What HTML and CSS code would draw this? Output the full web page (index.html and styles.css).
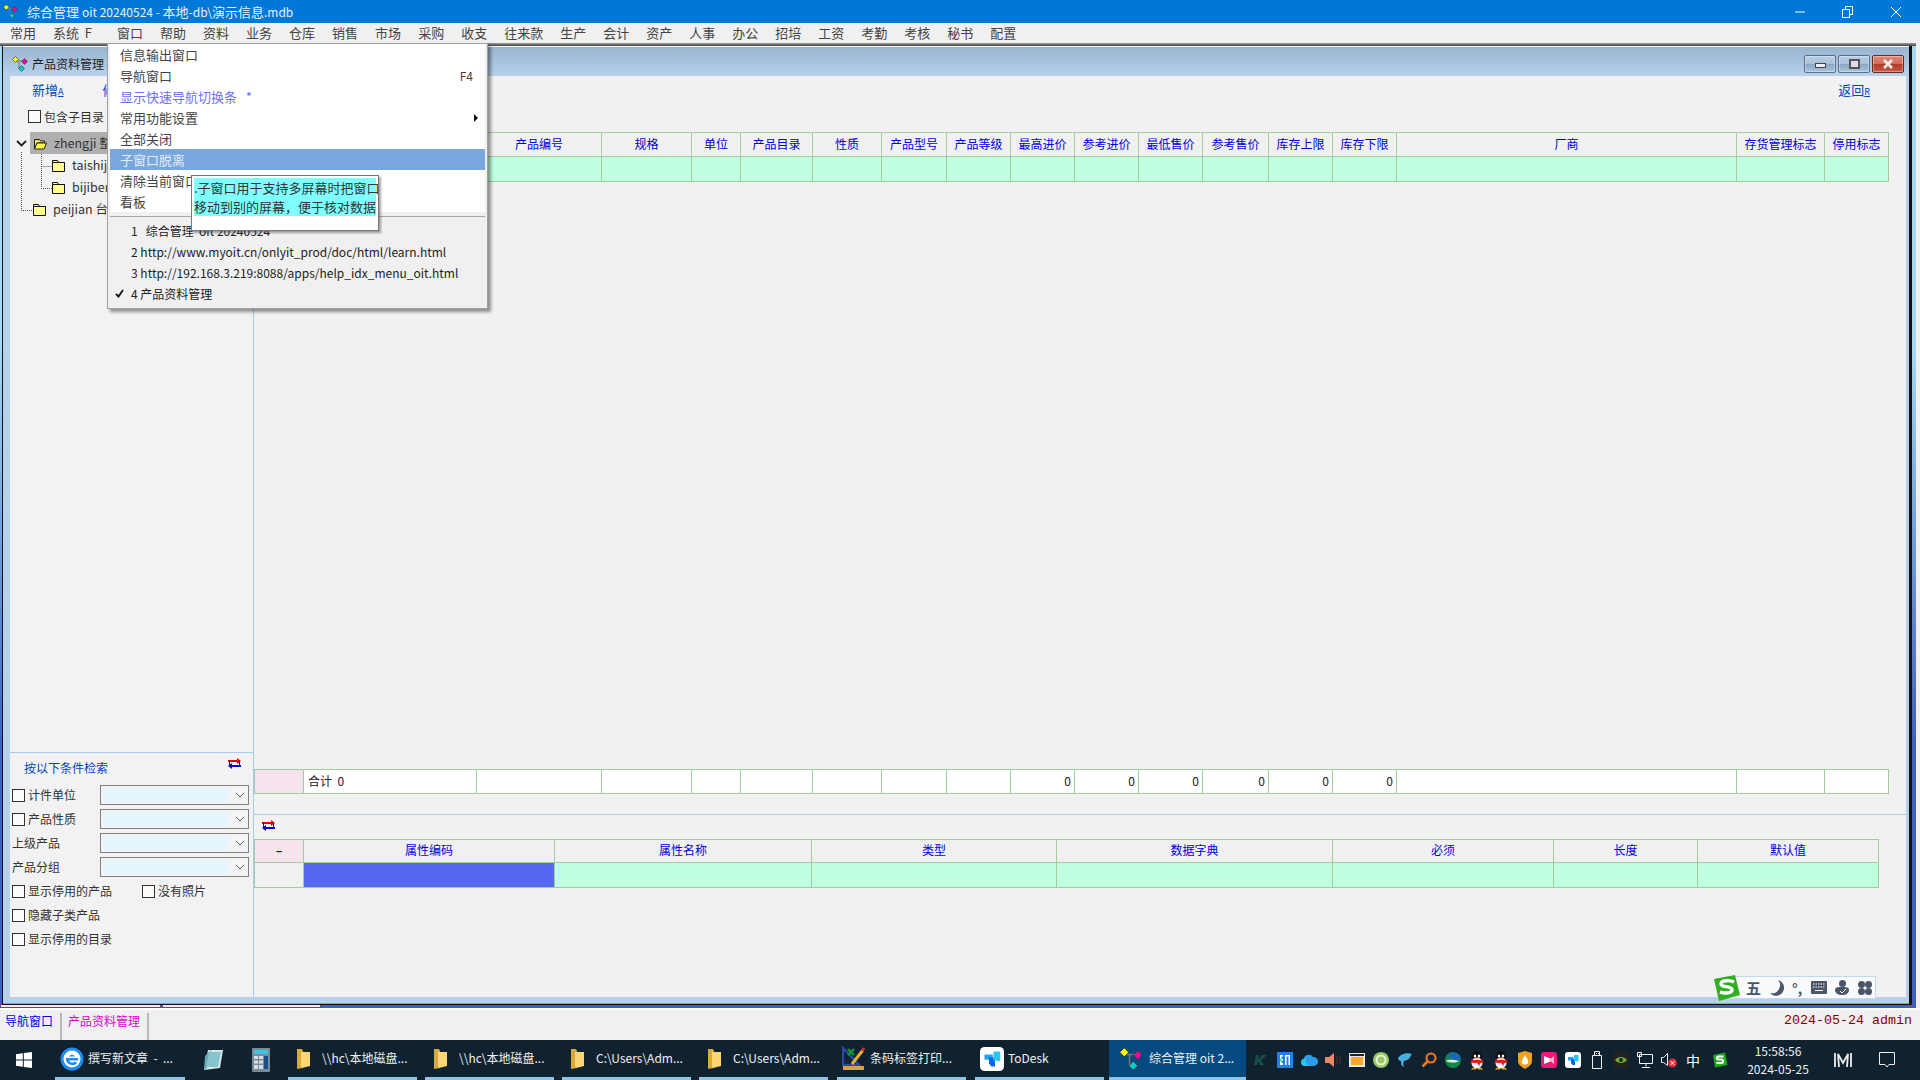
FILE: index.html
```html
<!DOCTYPE html>
<html lang="zh">
<head>
<meta charset="utf-8">
<title>综合管理 oit 20240524</title>
<link rel="stylesheet" href="styles.css">
</head>
<body>
<svg class="defs" width="0" height="0" aria-hidden="true">
  <symbol id="i-app" viewBox="0 0 16 16">
    <path d="M4 5h7M7 5v7h3" fill="none" stroke="#777" stroke-width="1"/>
    <path d="M3.500 .5l3 3-3 3-3-3z" fill="#ff0" stroke="#333" stroke-width=".6"/>
    <path d="M12.500 2.500l3 3-3 3-3-3z" fill="#e0109c" stroke="#333" stroke-width=".6"/>
    <path d="M9.500 9.500l3 3-3 3-3-3z" fill="#10c8c8" stroke="#333" stroke-width=".6"/>
  </symbol>
  <symbol id="i-folder" viewBox="0 0 13 13">
    <path d="M.5 3.500V1.500h5l1 2h6v9H.5z" fill="#ffff90" stroke="#111"/>
    <path d="M.5 3.500h12" stroke="#111"/>
  </symbol>
  <symbol id="i-folder-open" viewBox="0 0 13 13">
    <path d="M.5 2.500h5l1 1.500h4v2H3l-2.500 6z" fill="#f0e070" stroke="#222"/>
    <path d="M3 6h9.500l-2.500 6H.5z" fill="#ffff40" stroke="#222"/>
  </symbol>
  <symbol id="i-swap" viewBox="0 0 13 11">
    <path d="M0 3h10" stroke="#e00000" stroke-width="2"/><path d="M9 0l4 3-4 3z" fill="#e00000"/>
    <path d="M3 8h10" stroke="#0000e0" stroke-width="2"/><path d="M4 5L0 8l4 3z" fill="#0000e0"/>
    <path d="M1.500 3v5M11.500 3v5" stroke="#222"/>
  </symbol>
  <symbol id="i-tfolder" viewBox="0 0 15 22">
    <path d="M1 1h5l1 2v17l-6 1z" fill="#d9a93a"/>
    <path d="M5 4h9v14l-8 2-1-2z" fill="#fbd773"/>
  </symbol>
  <symbol id="i-qq" viewBox="0 0 16 20">
    <ellipse cx="8" cy="7" rx="5" ry="6" fill="#111"/>
    <ellipse cx="8" cy="13" rx="5.500" ry="5.500" fill="#f4f4f4"/>
    <path d="M2 10h12v2.500l-3 1-1 3-1-3-7-1z" fill="#d81e1e"/>
    <ellipse cx="6" cy="6" rx="1.200" ry="1.500" fill="#fff"/><ellipse cx="10" cy="6" rx="1.200" ry="1.500" fill="#fff"/>
    <path d="M5.500 8.500h5l-2.500 1.500z" fill="#f0a818"/>
    <path d="M3 18h4v1.500H2zM9 18h4l1 1.500H9z" fill="#f0a818"/>
  </symbol>
  <symbol id="i-todesk" viewBox="0 0 16 16">
    <rect width="16" height="16" rx="3" fill="#fff"/>
    <path d="M3 5h5.500v3.500H3z" fill="#16a7f0"/><path d="M6 7h4v6H7.500L6 11z" fill="#0a68e8"/><path d="M9 3h4.500v6.500L9 9z" fill="#24c8f0"/>
  </symbol>
</svg>

<div class="app">
  <header class="titlebar">
    <svg class="title-icon"><use href="#i-app"/></svg>
    <span class="title-text">综合管理 <span class="lat">oit 20240524 - </span>本地<span class="lat">-db\</span>演示信息<span class="lat">.mdb</span></span>
    <div class="win-controls">
      <svg width="12" height="12" viewBox="0 0 12 12"><path d="M1 6h10" stroke="#fff"/></svg>
      <svg width="12" height="12" viewBox="0 0 12 12"><path d="M.5 3.500h7v8h-7zM3.500 3V.5h7v8H8" fill="none" stroke="#fff"/></svg>
      <svg width="12" height="12" viewBox="0 0 12 12"><path d="M1 1l10 10M11 1L1 11" stroke="#fff"/></svg>
    </div>
  </header>

  <nav class="menubar">
    <span>常用</span><span class="menu-f">系统&nbsp; F</span><span>窗口</span><span>帮助</span><span>资料</span><span>业务</span><span>仓库</span><span>销售</span><span>市场</span><span>采购</span><span>收支</span><span>往来款</span><span>生产</span><span>会计</span><span>资产</span><span>人事</span><span>办公</span><span>招培</span><span>工资</span><span>考勤</span><span>考核</span><span>秘书</span><span>配置</span>
  </nav>

  <main class="mdi">
    <section class="child">
      <div class="child-title">
        <svg class="child-icon"><use href="#i-app"/></svg>
        <span class="child-name">产品资料管理</span>
        <div class="child-controls">
          <span class="cbtn"><i class="glyph-min"></i></span>
          <span class="cbtn"><i class="glyph-max"></i></span>
          <span class="cbtn cbtn-close"><svg width="12" height="10" viewBox="0 0 12 10"><path d="M2 1l8 8M10 1L2 9" stroke="#eee" stroke-width="2.600"/></svg></span>
        </div>
      </div>
      <div class="child-body">
        <aside class="left">
          <div class="left-tools"><a class="link">新增<u>A</u></a><a class="link">修改<u>E</u></a></div>
          <div class="check-row inc"><span class="check"></span><span>包含子目录</span></div>
          <div class="tree">
            <svg class="tree-lines" width="60" height="90" viewBox="0 0 60 90">
              <path d="M21.500 20v58.500H33M41.500 22v34.500H52M41.500 34.500H52" fill="none" stroke="#555" stroke-dasharray="1 1"/>
              <path d="M17 9l4.500 4.500L26 9" fill="none" stroke="#222" stroke-width="1.800"/>
            </svg>
            <div class="tree-row lv0 selected"><svg class="folder"><use href="#i-folder-open"/></svg><span>zhengji 整机</span></div>
            <div class="tree-row lv1"><svg class="folder"><use href="#i-folder"/></svg><span>taishiji 台式机</span></div>
            <div class="tree-row lv1"><svg class="folder"><use href="#i-folder"/></svg><span>bijiben 笔记本</span></div>
            <div class="tree-row lv0"><svg class="folder"><use href="#i-folder"/></svg><span>peijian 台配件</span></div>
          </div>
          <div class="filter">
            <div class="filter-head"><span class="filter-title">按以下条件检索</span><svg class="swap"><use href="#i-swap"/></svg></div>
            <div class="f-row"><span class="check"></span><span class="f-label">计件单位</span><span class="combo"><b></b><svg width="10" height="6" viewBox="0 0 10 6"><path d="M1 1l4 4 4-4" fill="none" stroke="#666"/></svg></span></div>
            <div class="f-row"><span class="check"></span><span class="f-label">产品性质</span><span class="combo"><b></b><svg width="10" height="6" viewBox="0 0 10 6"><path d="M1 1l4 4 4-4" fill="none" stroke="#666"/></svg></span></div>
            <div class="f-row"><span class="f-label f-wide">上级产品</span><span class="combo"><b></b><svg width="10" height="6" viewBox="0 0 10 6"><path d="M1 1l4 4 4-4" fill="none" stroke="#666"/></svg></span></div>
            <div class="f-row"><span class="f-label f-wide">产品分组</span><span class="combo"><b></b><svg width="10" height="6" viewBox="0 0 10 6"><path d="M1 1l4 4 4-4" fill="none" stroke="#666"/></svg></span></div>
            <div class="f-row"><span class="check"></span><span class="f-label f-long">显示停用的产品</span><span class="check"></span><span class="f-label">没有照片</span></div>
            <div class="f-row"><span class="check"></span><span class="f-label">隐藏子类产品</span></div>
            <div class="f-row"><span class="check"></span><span class="f-label">显示停用的目录</span></div>
          </div>
        </aside>

        <div class="right">
          <div class="right-tools"><a class="link">返回<u>R</u></a></div>
          <div class="grid g-main">
            <div class="hd">序号</div><div class="hd">产品名称</div><div class="hd">产品编号</div><div class="hd">规格</div><div class="hd">单位</div><div class="hd">产品目录</div><div class="hd">性质</div><div class="hd">产品型号</div><div class="hd">产品等级</div><div class="hd">最高进价</div><div class="hd">参考进价</div><div class="hd">最低售价</div><div class="hd">参考售价</div><div class="hd">库存上限</div><div class="hd">库存下限</div><div class="hd">厂商</div><div class="hd">存货管理标志</div><div class="hd">停用标志</div>
            <div class="gc"></div><div class="gc"></div><div class="gc"></div><div class="gc"></div><div class="gc"></div><div class="gc"></div><div class="gc"></div><div class="gc"></div><div class="gc"></div><div class="gc"></div><div class="gc"></div><div class="gc"></div><div class="gc"></div><div class="gc"></div><div class="gc"></div><div class="gc"></div><div class="gc"></div><div class="gc"></div>
          </div>
          <div class="spacer"></div>
          <div class="grid g-main g-sum">
            <div class="pink"></div><div class="wc tl">合计&nbsp; 0</div><div class="wc"></div><div class="wc"></div><div class="wc"></div><div class="wc"></div><div class="wc"></div><div class="wc"></div><div class="wc"></div><div class="wc tr">0</div><div class="wc tr">0</div><div class="wc tr">0</div><div class="wc tr">0</div><div class="wc tr">0</div><div class="wc tr">0</div><div class="wc"></div><div class="wc"></div><div class="wc"></div>
          </div>
          <div class="detail">
            <div class="detail-head"><svg class="swap"><use href="#i-swap"/></svg></div>
            <div class="grid g-detail">
              <div class="pink hd-minus">–</div><div class="hd">属性编码</div><div class="hd">属性名称</div><div class="hd">类型</div><div class="hd">数据字典</div><div class="hd">必须</div><div class="hd">长度</div><div class="hd">默认值</div>
              <div class="plain"></div><div class="gc sel"></div><div class="gc"></div><div class="gc"></div><div class="gc"></div><div class="gc"></div><div class="gc"></div><div class="gc"></div>
            </div>
          </div>
        </div>
      </div>
      <div class="child-foot"></div>
    </section>
    <div class="mdi-strip"><i></i><i class="long"></i></div>
  </main>

  <footer class="status">
    <span class="tab tab-nav">导航窗口</span>
    <span class="tab tab-cur">产品资料管理</span>
    <span class="status-right">2024-05-24 admin</span>
  </footer>

  <div class="taskbar">
    <span class="start"><svg width="16" height="16" viewBox="0 0 16 16"><path d="M0 2.300l6.800-1v6.200H0zM7.800 1.100L16 0v7.500H7.800zM0 8.500h6.800v6.200l-6.800-1zM7.800 8.500H16V16l-8.200-1.100z" fill="#fff"/></svg></span>
    <span class="task t-first">
      <svg width="24" height="24" viewBox="0 0 24 24"><circle cx="12" cy="12" r="11.500" fill="#1d8cf0"/><circle cx="12" cy="12" r="8.500" fill="#fff"/><path d="M6 11h12v2.500H9c.5 2 3.500 3 6.500 1l1.500 2c-4 3-10 1.500-11-3.500zM9 9.500c1-2.500 5-2.500 6 0z" fill="#1d8cf0"/></svg>
      <span class="tlabel">撰写新文章&nbsp; -&nbsp; ...</span>
    </span>
    <span class="pin"><svg width="24" height="24" viewBox="0 0 24 24"><path d="M7 2h15l-3 18-16 2z" fill="#d8e8ea"/><path d="M4 8l6-6-4 18-3 2z" fill="#5fa8b8"/><path d="M8 4h12l-3 15H5z" fill="#88c4cc"/></svg></span>
    <span class="pin"><svg width="18" height="24" viewBox="0 0 18 24"><rect width="18" height="24" rx="1" fill="#7b8a94"/><rect x="2" y="2" width="14" height="4" fill="#37c8e8"/><path d="M2 8h4v3H2zM7 8h4v3H7zM2 12.500h4v3H2zM7 12.500h4v3H7zM2 17h4v4H2zM7 17h4v4H7z" fill="#d8dee2"/><path d="M12 8h4v13h-4z" fill="#15508c"/></svg></span>
    <span class="task"><svg class="tf"><use href="#i-tfolder"/></svg><span class="tlabel">\\hc\本地磁盘...</span></span>
    <span class="task"><svg class="tf"><use href="#i-tfolder"/></svg><span class="tlabel">\\hc\本地磁盘...</span></span>
    <span class="task"><svg class="tf"><use href="#i-tfolder"/></svg><span class="tlabel">C:\Users\Adm...</span></span>
    <span class="task"><svg class="tf"><use href="#i-tfolder"/></svg><span class="tlabel">C:\Users\Adm...</span></span>
    <span class="task task-ic"><svg width="24" height="26" viewBox="0 0 24 26"><path d="M1 2v17h16z" fill="none" stroke="#2848a8" stroke-width="2.400"/><path d="M6 3l6 6M12 3L6 9" stroke="#1a9838" stroke-width="2.400"/><path d="M10 18L21 4" stroke="#e8b030" stroke-width="3"/><path d="M20 5l2-3" stroke="#e02828" stroke-width="3"/><path d="M1 20h21v4H1z" fill="#d8a040"/></svg><span class="tlabel">条码标签打印...</span></span>
    <span class="task task-ic"><svg width="24" height="24"><use href="#i-todesk"/></svg><span class="tlabel">ToDesk</span></span>
    <span class="task task-active"><svg width="24" height="24"><use href="#i-app"/></svg><span class="tlabel">综合管理 oit 2...</span></span>
    <div class="tray">
      <span><svg width="14" height="12" viewBox="0 0 14 12"><path d="M2 1h3L4 5l5-4h4L7 6l3 5H6L4 7l-1 4H0z" fill="#155048"/></svg></span>
      <span><svg width="16" height="16" viewBox="0 0 16 16"><rect width="16" height="16" fill="#1e82e8"/><path d="M3 3h3v1.500H4.500V7H6v1.500H4.500V11H6v2H3zM8 3h5v10h-1.500V4.500H9.500V13H8z" fill="#fff"/><path d="M3 6l2 2-2 2z" fill="#48e070"/></svg></span>
      <span><svg width="18" height="12" viewBox="0 0 18 12"><path d="M5 12a4 4 0 0 1-1-7.800A5 5 0 0 1 13 3a4.500 4.500 0 0 1 1 9z" fill="#2c9ce8"/><path d="M1 8a4 4 0 0 1 5-3 7 7 0 0 0 3 7H5a4 4 0 0 1-4-4z" fill="#28c8e0"/></svg></span>
      <span><svg width="16" height="16" viewBox="0 0 16 16"><path d="M0 5h4l5-4v14l-5-4H0z" fill="#e88868"/><path d="M12 4v8M15 3v10" stroke="#5a3030"/></svg></span>
      <span><svg width="16" height="14" viewBox="0 0 16 14"><rect width="16" height="14" fill="#e8e8e8"/><rect x="1" y="1" width="14" height="2" fill="#222"/><rect x="2" y="4" width="12" height="8" fill="#f8a828"/></svg></span>
      <span><svg width="16" height="16" viewBox="0 0 16 16"><circle cx="8" cy="8" r="8" fill="#98c860"/><circle cx="8" cy="8" r="4.500" fill="none" stroke="#e8f4d8" stroke-width="2"/></svg></span>
      <span><svg width="16" height="16" viewBox="0 0 16 16"><path d="M1 7c1-4 7-7 14-5-2 2-2 5-5 6l-3 1c-1 2-1 4 0 6-3-1-3-4-3-6-1 0-2-1-3-2z" fill="#48b0e0"/></svg></span>
      <span><svg width="16" height="16" viewBox="0 0 16 16"><circle cx="10" cy="6" r="4.500" fill="none" stroke="#f07818" stroke-width="2.200"/><path d="M6.500 9.500L1.500 14.500" stroke="#f07818" stroke-width="2.600"/></svg></span>
      <span><svg width="16" height="16" viewBox="0 0 16 16"><circle cx="8" cy="8" r="8" fill="#108848"/><path d="M3 2.500A8 8 0 0 1 16 8H7z" fill="#1868b8"/><path d="M1 9c3-2 8-1 13 0-3 2-9 2-13 0z" fill="#e0f0e0"/></svg></span>
      <span><svg width="16" height="20"><use href="#i-qq"/></svg></span>
      <span><svg width="16" height="20"><use href="#i-qq"/></svg></span>
      <span><svg width="16" height="18" viewBox="0 0 16 18"><path d="M1 2l7-2 7 2v8c0 4-4 6-7 8-3-2-7-4-7-8z" fill="#f0a020"/><path d="M8 4c1 3 4 4 3 8-1 2-5 2-6 0-1-2 1-4 3-8z" fill="#fff"/></svg></span>
      <span><svg width="16" height="16" viewBox="0 0 16 16"><rect width="16" height="16" rx="3" fill="#f01878"/><path d="M3 4l10 4-10 4z" fill="#fff"/><path d="M13 4v8L8 8z" fill="#f8b0d0"/></svg></span>
      <span><svg width="16" height="16"><use href="#i-todesk"/></svg></span>
      <span><svg width="12" height="18" viewBox="0 0 12 18"><path d="M3.500 .5h5v4h-5zM1.500 4.500h9v13h-9z" fill="none" stroke="#eee"/><path d="M5 2h1v1H5zM7 2h1v1H7z" fill="#eee"/></svg></span>
      <span><svg width="16" height="16" viewBox="0 0 16 16"><rect width="16" height="16" fill="#222"/><path d="M2 8c3-4 9-4 12 0-3 4-9 4-12 0z" fill="#70b030"/><circle cx="8" cy="8" r="2" fill="#222"/></svg></span>
      <span><svg width="16" height="16" viewBox="0 0 16 16"><path d="M2.500 2.500h13v9h-13zM.5 .5h4v4h-4zM9 11.500v3M5 15.500h8" fill="none" stroke="#f4f4f4"/></svg></span>
      <span class="tray-vol"><svg width="16" height="16" viewBox="0 0 16 16"><path d="M.5 5.500h2l4-4v12l-4-3h-2z" fill="none" stroke="#eee"/><circle cx="11.500" cy="11" r="4.500" fill="#e02838"/><path d="M9.500 9l4 4M13.500 9l-4 4" stroke="#fff"/></svg></span>
      <span class="tray-zh">中</span>
      <span class="tray-s"><svg width="16" height="16" viewBox="0 0 16 16"><path d="M1 3l12-2.500L15.500 13 3 15.500z" fill="#1ea820"/><path d="M11.500 4.500H6.500c-2 0-2 3 0 3h3c2 0 2 3.500 0 3.500H4.500" fill="none" stroke="#fff" stroke-width="2"/></svg></span>
    </div>
    <div class="clock"><span>15:58:56</span><span>2024-05-25</span></div>
    <span class="m-icon"><svg width="18" height="16" viewBox="0 0 18 16"><path d="M1 15V1M5 15L4 2l5 9 5-9-1 13M17 15V1" fill="none" stroke="#eee" stroke-width="1.800"/></svg></span>
    <span class="notify"><svg width="16" height="16" viewBox="0 0 16 16"><path d="M.5 .5h15v12H10l-2 2.500L6 12.500H.5z" fill="none" stroke="#eee"/></svg></span>
  </div>

  <div class="popup">
    <div class="group-top">
      <div class="mi">信息输出窗口</div>
      <div class="mi mi-split"><span>导航窗口</span><span class="mi-key">F4</span></div>
      <div class="mi mi-violet">显示快速导航切换条&nbsp;&nbsp; *</div>
      <div class="mi mi-split"><span>常用功能设置</span><i class="arrow"></i></div>
      <div class="mi">全部关闭</div>
      <div class="mi mi-hi">子窗口脱离</div>
      <div class="mi">清除当前窗口</div>
      <div class="mi">看板</div>
    </div>
    <div class="sep"></div>
    <div class="mi mi-n lat">1&nbsp;&nbsp;&nbsp;综合管理&nbsp; oit 20240524</div>
    <div class="mi mi-n lat">2 http://www.myoit.cn/onlyit_prod/doc/html/learn.html</div>
    <div class="mi mi-n lat">3 http://192.168.3.219:8088/apps/help_idx_menu_oit.html</div>
    <div class="mi mi-n lat"><svg class="tick" width="9" height="9" viewBox="0 0 9 9"><path d="M1 5l2.500 2.500L8 1" fill="none" stroke="#111" stroke-width="1.800"/></svg>4 产品资料管理</div>
  </div>

  <div class="tip">
    <div class="tip-l">.子窗口用于支持多屏幕时把窗口</div>
    <div class="tip-l">移动到别的屏幕，便于核对数据</div>
  </div>

  <div class="ime">
    <svg class="ime-s" width="28" height="28" viewBox="0 0 28 28"><path d="M1 5l21-4 5 20-21 6z" fill="#2fb020"/><path d="M21 8c-4-2-13-2-13 2 0 4 11 1 11 6 0 3-7 4-12 2" fill="none" stroke="#fff" stroke-width="3.400"/></svg>
    <span class="ime-wu">五</span>
    <svg width="14" height="16" viewBox="0 0 14 16"><path d="M8 0a8 8 0 0 1-8 13 8 8 0 1 0 8-13z" fill="#4a5568"/></svg>
    <span class="ime-dot">°,</span>
    <svg width="16" height="13" viewBox="0 0 16 13"><rect width="16" height="13" rx="1" fill="#4a5568"/><path d="M2 3h12M2 6h12" stroke="#fff" stroke-dasharray="1.500 1" /><path d="M4 9.500h8" stroke="#fff"/></svg>
    <svg width="14" height="15" viewBox="0 0 14 15"><circle cx="7.500" cy="3.500" r="3.500" fill="#4a5568"/><path d="M0 10c0-3 3-3 7-3s7 0 7 3-3 5-7 5-7-2-7-5z" fill="#4a5568"/><path d="M5 11l2 2 4-4" fill="none" stroke="#fff"/></svg>
    <svg width="14" height="14" viewBox="0 0 14 14"><circle cx="3.500" cy="3.500" r="3.500" fill="#4a5568"/><circle cx="10.500" cy="3.500" r="3.500" fill="#4a5568"/><circle cx="3.500" cy="10.500" r="3.500" fill="#4a5568"/><circle cx="10.500" cy="10.500" r="3.500" fill="#4a5568"/></svg>
  </div>
</div>
</body>
</html>
```
FILE: styles.css
```css
* { box-sizing: border-box; }
html, body { margin: 0; padding: 0; }
body { font-family: "Noto Sans CJK SC", "Liberation Sans", sans-serif; font-size: 13px; line-height: 16px; color: #333; background: #f0f0f0; }
.defs { position: absolute; }
.lat { font-size: 12px; }
.app { position: relative; width: 1920px; height: 1080px; display: flex; flex-direction: column; overflow: hidden; }

.titlebar { height: 23px; flex: none; background: #0078d7; color: #e8f2fb; display: flex; align-items: center; padding-left: 3px; }
.title-icon { width: 15px; height: 15px; flex: none; }
.title-text { margin-left: 9px; }
.win-controls { margin-left: auto; display: flex; gap: 36px; padding-right: 18px; }
.win-controls svg { display: block; }

.menubar { height: 20px; flex: none; background: #f0f0f0; display: flex; align-items: center; gap: 17px; padding-left: 10px; color: #444; }
.menu-f { min-width: 47px; }

.mdi { height: 965px; flex: none; display: flex; flex-direction: column; padding: 3px 8px 0 2px; background: linear-gradient(#a8d8f0 300px, #4060c0 700px); position: relative; }
.mdi::before { content: ""; position: absolute; left: 0; right: 0; top: 0; height: 3px; background: linear-gradient(#a0a0a0, #404040); }
.mdi::after { content: ""; position: absolute; right: 0; top: 0; bottom: 0; width: 4px; background: #f0f0f0; }
.child { height: 959px; flex: none; display: flex; flex-direction: column; border-left: 1px solid #111; border-right: 3px solid #111; border-bottom: 1px solid #111; background: #b8d0ea; padding-top: 1px; box-shadow: inset 0 1px 0 #f4f8fc; }
.child-title { height: 29px; flex: none; background: linear-gradient(#9ab3d0, #b8d2ee); display: flex; align-items: center; padding: 4px 5px 0 9px; color: #222; font-size: 12px; }
.child-icon { width: 16px; height: 16px; flex: none; }
.child-name { margin-left: 4px; }
.child-controls { margin-left: auto; display: flex; gap: 2px; }
.cbtn { width: 32px; height: 18px; border: 1px solid #5a7088; border-radius: 2px; background: linear-gradient(#b8cee4 0, #a8c0d8 50%, #8aa8c6 52%, #a8c4e0 100%); display: flex; align-items: center; justify-content: center; box-shadow: inset 0 0 0 1px rgba(255,255,255,.35); }
.cbtn-close { background: linear-gradient(#e08878 0, #d06a58 50%, #b03c28 52%, #c85a48 100%); border-color: #702820; }
.glyph-min { display: block; width: 11px; height: 5px; border: 1px solid #444; background: #eee; margin-top: 3px; }
.glyph-max { display: block; width: 11px; height: 10px; border: 2px solid #555; background: #dde; }

.child-body { height: 921px; flex: none; display: flex; margin: 0 3px 0 7px; background: #f1f1f1; }
.child-foot { height: 7px; flex: none; border-bottom: 1px solid #30c8e0; }
.mdi-strip { height: 3px; flex: none; margin: 0 -4px 0 -2px; display: flex; background: #4060c0; }
.mdi-strip i { display: block; width: 161px; background: #eee; border: 1px solid #555; border-top: 0; }
.mdi-strip i.long { width: 159px; margin-left: 1px; }

.link { color: #0046c0; font-size: 13px; line-height: 16px; }
.link u { font-size: 9px; }

/* left panel */
.left { width: 244px; flex: none; display: flex; flex-direction: column; border-right: 1px solid #a8ccf0; background: #f2f2f2; font-size: 12px; }
.left-tools { height: 28px; flex: none; display: flex; gap: 39px; padding: 6px 0 0 22px; }
.check { display: block; width: 13px; height: 13px; flex: none; border: 1px solid #333; background: #fbfbfb; }
.check-row { display: flex; align-items: center; }
.inc { height: 28px; flex: none; padding: 0 0 3px 18px; gap: 3px; }
.tree { position: relative; height: 88px; flex: none; font-size: 12.5px; }
.tree-lines { position: absolute; left: 0; top: 0; margin-left: -10px; }
.tree-row { height: 22px; display: flex; align-items: center; gap: 7px; white-space: nowrap; color: #333; }
.tree-row.lv0 { padding-left: 23px; }
.tree-row.lv1 { padding-left: 42px; }
.tree-row.selected { background: #b0b0b0; margin-left: 20px; padding-left: 4px; }
.folder { width: 13px; height: 13px; flex: none; }

.filter { margin-top: auto; height: 245px; flex: none; border-top: 1px solid #a8ccf0; }
.filter-head { height: 30px; display: flex; align-items: center; justify-content: space-between; padding: 0 12px 0 14px; color: #0046c0; }
.filter-head .swap { margin-top: -10px; }
.swap { width: 13px; height: 11px; display: block; flex: none; }
.f-row { height: 24px; display: flex; align-items: center; padding-left: 2px; }
.f-row .f-label { margin-left: 3px; white-space: nowrap; }
.f-row .f-label + .combo { margin-left: auto; }
.f-row .f-wide { margin-left: 0; }
.f-row .f-long { width: 114px; }
.combo { width: 149px; height: 20px; margin-right: 4px; border: 1px solid #808080; padding: 2px; display: flex; align-items: center; gap: 6px; background: #f4f4f4; }
.combo b { display: block; width: 126px; height: 14px; background: #e6f5fb; }
.combo svg { flex: none; }

/* right panel */
.right { flex: 1; min-width: 0; display: flex; flex-direction: column; }
.right-tools { height: 56px; flex: none; display: flex; justify-content: flex-end; padding: 6px 36px 0 0; }
.grid { display: grid; flex: none; border-top: 1px solid #a0cca0; border-left: 1px solid #a0cca0; font-size: 12px; }
.g-main { grid-template-columns: 49px 173px 125px 90px 49px 72px 69px 65px 64px 64px 64px 64px 66px 64px 64px 340px 88px 64px; width: 1635px; }
.g-detail { grid-template-columns: 49px 251px 257px 245px 276px 221px 144px 181px; width: 1625px; }
.g-main > .hd { height: 24px; }
.g-detail > .hd, .g-detail > .pink { height: 23px; }
.hd, .gc, .wc, .pink, .plain { border-right: 1px solid #a0cca0; border-bottom: 1px solid #a0cca0; }
.hd { color: #0000d8; background: #f0f0f0; display: flex; align-items: center; justify-content: center; white-space: nowrap; overflow: hidden; padding-bottom: 2px; }
.gc { height: 25px; background: #c0ffe0; }
.gc.sel { background: #5568f0; }
.plain { height: 25px; background: #f0f0f0; }
.pink { background: #f5e4ee; }
.hd-minus { color: #0000d8; font-weight: 700; display: flex; align-items: center; justify-content: center; padding-bottom: 2px; }
.spacer { height: 587px; flex: none; }
.g-sum > div { height: 24px; }
.wc { background: #fff; display: flex; align-items: center; color: #222; padding-bottom: 2px; }
.tl { padding-left: 4px; }
.tr { justify-content: flex-end; padding-right: 3px; }
.detail { margin-top: 20px; border-top: 1px solid #a8ccf0; flex: none; }
.detail-head { height: 24px; display: flex; align-items: center; padding: 0 0 4px 8px; }

/* status + taskbar */
.status { height: 32px; flex: none; border-top: 2px solid #fff; background: #f0f0f0; display: flex; padding-top: 3px; font-size: 12px; }
.tab { display: block; height: 27px; padding: 0 7px 0 5px; border-right: 2px solid #b8b8b8; }
.tab-nav { color: #0000e8; }
.tab-cur { color: #e000d0; padding-left: 6px; }
.status-right { margin-left: auto; padding: 0 8px 0 0; font-family: "Liberation Mono", monospace; font-size: 13.33px; color: #800000; }

.taskbar { height: 40px; flex: none; background: #10222f; display: flex; align-items: stretch; color: #f0f0f0; position: relative; font-size: 12px; }
.start { width: 48px; margin-right: 7px; display: flex; align-items: center; justify-content: center; flex: none; }
.task { width: 129px; margin-right: 8px; flex: none; display: flex; align-items: center; gap: 11px; padding-left: 8px; border-bottom: 3px solid #8fc4e4; white-space: nowrap; overflow: hidden; }
.t-first { width: 130px; margin-right: 4px; padding-left: 5px; gap: 4px; }
.pin { width: 48px; flex: none; display: flex; align-items: center; justify-content: center; }
.pin + .task { margin-left: 3px; }
.tf { width: 15px; height: 22px; flex: none; }
.task-ic { margin-left: 1px; padding-left: 5px; gap: 4px; }
.task-active { width: 137px; margin-right: 3px; margin-left: -3px; padding-left: 10px; gap: 6px; background: #054a80; }
.tlabel { display: block; padding-bottom: 1px; }
.tray { display: flex; width: 480px; flex: none; }
.tray > span { width: 24px; flex: none; display: flex; align-items: center; justify-content: center; }
.tray-zh { font-size: 14px; color: #fff; }
.tray > .tray-s { padding-left: 6px; }
.clock { width: 98px; flex: none; display: flex; flex-direction: column; align-items: center; justify-content: center; gap: 2px; }
.m-icon { width: 32px; display: flex; align-items: center; justify-content: center; flex: none; }
.notify { width: 56px; display: flex; align-items: center; justify-content: center; flex: none; }

/* popup menu */
.popup { position: absolute; left: 107px; top: 43px; width: 381px; height: 266px; background: #f0f0f0; border: 1px solid #a0a0a0; padding: 0 2px; box-shadow: 3px 3px 3px rgba(0,0,0,.4); }
.group-top { background: #fff; height: 168px; }
.mi { height: 21px; padding-left: 10px; display: flex; align-items: center; color: #444; white-space: nowrap; }
.mi-split { justify-content: space-between; padding-right: 10px; }
.mi-key { padding-right: 2px; font-size: 12px; }
.mi-violet { color: #7070f0; }
.mi-hi { background: #78a7de; color: #e4ecf6; }
.arrow { width: 0; height: 0; border-left: 4px solid #111; border-top: 4px solid transparent; border-bottom: 4px solid transparent; margin-right: -3px; }
.sep { height: 1px; background: #a8a8a8; margin: 4px 0 3px; }
.mi-n { padding-left: 21px; color: #222; position: relative; }
.tick { position: absolute; left: 5px; top: 6px; }

.tip { position: absolute; left: 191px; top: 175px; width: 188px; height: 56px; background: #fff; border: 1px solid #777; padding: 2px 2px; box-shadow: 2px 2px 2px rgba(0,0,0,.35); color: #333; }
.tip-l { height: 19px; line-height: 19px; background: #7fffff; white-space: nowrap; }

/* input method bar */
.ime { position: absolute; left: 1727px; top: 976px; width: 149px; height: 23px; background: #f8fafc; border: 1px solid #c4d8ea; display: flex; align-items: center; gap: 8.5px; padding-left: 18px; color: #4a5568; }
.ime-s { position: absolute; left: -15px; top: -3px; }
.ime-wu { font-size: 15px; font-weight: 700; }
.ime-dot { font-weight: 700; font-size: 14px; }
```
